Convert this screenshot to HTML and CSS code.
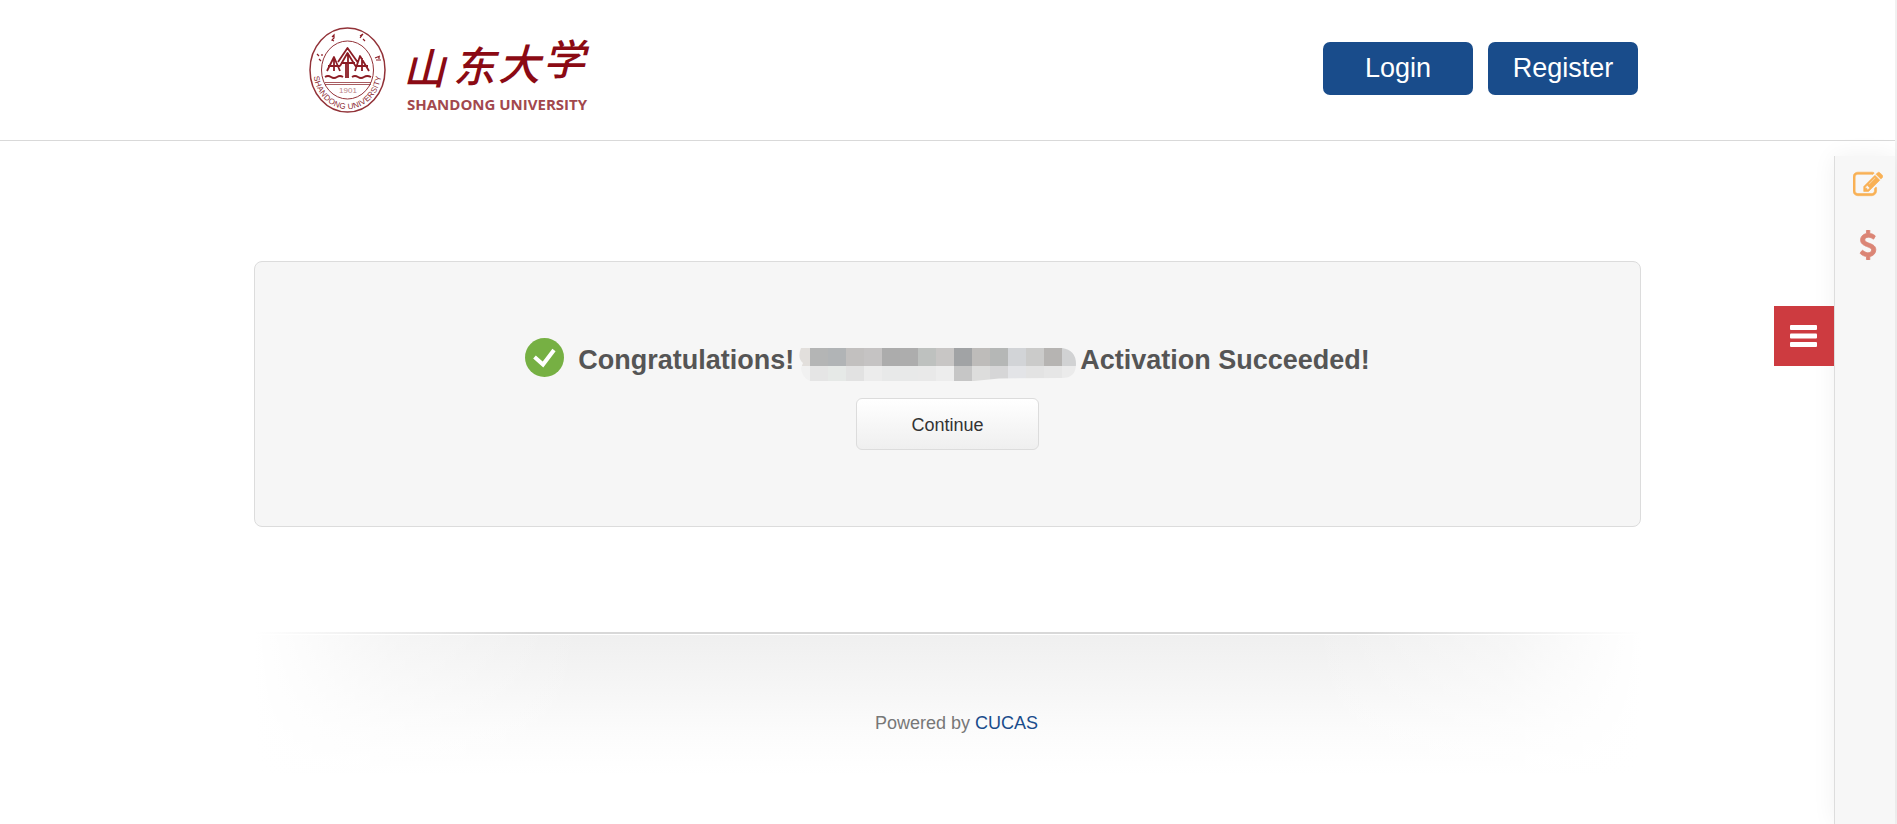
FILE: index.html
```html
<!DOCTYPE html>
<html lang="en">
<head>
<meta charset="utf-8">
<title>Shandong University</title>
<link rel="stylesheet" href="styles.css">
</head>
<body>
<header class="header">
  <div class="container header-inner">
    <a class="logo" href="#" aria-label="Shandong University">
      <svg width="290" height="100" viewBox="0 0 290 100" fill="none">
        <g stroke="#923238">
          <ellipse cx="42.500" cy="50" rx="37.500" ry="42" stroke-width="1.500"/>
          <ellipse cx="42.500" cy="50" rx="26" ry="29" stroke-width="1"/>
          <path d="M20 62.500h46M20 64.500h46" stroke-width=".8"/>
        </g>
        <g stroke="#8c1c24" stroke-width="1.800" stroke-linejoin="round">
          <path d="M20 57q3-2 6 0t6 0 6 0M47 57q3-2 6 0t6 0 7 0"/>
          <path d="M22 51l7-14 6 14M29 38v13M23 46h12M33 42l9.500-14 10 14M35 46l7.500-13 8 13M43 33v25M36 43h14M50 51l5-15 9 15M57 38v13M50 46h13M41 58V44"/>
        </g>
        <path d="M27 17l2-2 0 3-2 2 2 1M55 16l3-2-3 4M58 19l2 2M12 34l2 2M14 39l2 2M17 34v2M70 38l5-2M71 40h5M74 36v3" stroke="#8c1c24" stroke-width="1.200"/>
        <text class="seal-year" x="43" y="73" text-anchor="middle">1901</text>
        <path id="seal-arc" d="M10.500 51A32 36 0 0 0 74.500 51"/>
        <text class="seal-name"><textPath href="#seal-arc" startOffset="50%" text-anchor="middle">SHANDONG UNIVERSITY</textPath></text>
        <text class="logo-cn" x="98 148 193 238" y="64 62 60 55">山东大学</text>
        <text class="logo-en" x="102" y="90">SHANDONG UNIVERSITY</text>
      </svg>
    </a>
    <nav class="account">
      <a class="account-link" href="#">Login</a>
      <a class="account-link" href="#">Register</a>
    </nav>
  </div>
</header>

<main class="container card">
  <div class="message">
    <svg class="check" width="39" height="39" viewBox="0 0 39 39" fill="none">
      <circle cx="19.500" cy="19.500" r="19.500" fill="#76b043"/>
      <path d="M9.500 19l8.500 7.500L29 12" stroke="#fff" stroke-width="4"/>
    </svg>
    <h1 class="message-text">Congratulations!</h1>
    <svg class="masked-name" width="277" height="33" viewBox="0 0 277 33">
      <clipPath id="name-shape"><path d="M2 0H263Q277 2 277 16Q277 30 263 30L200 30.500L175 33H11Q3 30 2 20L4 15Q-2 10 2 0Z"/></clipPath>
      <g clip-path="url(#name-shape)" shape-rendering="crispEdges">
        <path fill="#e2dfdc" d="M0 0h11v18H0z"/>
        <path fill="#b4b5b5" d="M11 0h18v18H11z"/>
        <path fill="#b1b4b6" d="M29 0h18v18H29z"/>
        <path fill="#c2c0bf" d="M47 0h18v18H47z"/>
        <path fill="#c5c3c3" d="M65 0h18v18H65z"/>
        <path fill="#acacac" d="M83 0h18v18H83z"/>
        <path fill="#adadad" d="M101 0h18v18h-18z"/>
        <path fill="#bec1bf" d="M119 0h18v18h-18z"/>
        <path fill="#c8c6c5" d="M137 0h18v18h-18z"/>
        <path fill="#a1a3a5" d="M155 0h18v18h-18z"/>
        <path fill="#bebcba" d="M173 0h18v18h-18z"/>
        <path fill="#b5b7b6" d="M191 0h18v18h-18z"/>
        <path fill="#d2d4d7" d="M209 0h18v18h-18z"/>
        <path fill="#cbcbca" d="M227 0h18v18h-18z"/>
        <path fill="#b6b4b2" d="M245 0h18v18h-18z"/>
        <path fill="#d1d2d3" d="M263 0h14v18h-14z"/>
        <path fill="#f1f1f1" d="M0 18h11v15H0z"/>
        <path fill="#e5e5e5" d="M11 18h18v15H11z"/>
        <path fill="#e6e9e7" d="M29 18h18v15H29z"/>
        <path fill="#e2e2e2" d="M47 18h18v15H47z"/>
        <path fill="#ececec" d="M65 18h18v15H65z"/>
        <path fill="#e8e9e9" d="M83 18h36v15H83z"/>
        <path fill="#e9e9e9" d="M119 18h18v15h-18z"/>
        <path fill="#ededed" d="M137 18h18v15h-18z"/>
        <path fill="#c6c6c6" d="M155 18h18v15h-18z"/>
        <path fill="#dddddc" d="M173 18h18v15h-18z"/>
        <path fill="#d6d6d7" d="M191 18h18v15h-18z"/>
        <path fill="#e3e4e7" d="M209 18h18v15h-18z"/>
        <path fill="#e3e3e3" d="M227 18h18v15h-18z"/>
        <path fill="#e6e6e6" d="M245 18h18v15h-18z"/>
        <path fill="#ebebeb" d="M263 18h14v15h-14z"/>
      </g>
    </svg>
    <strong class="message-text message-end">Activation Succeeded!</strong>
  </div>
  <button class="continue" type="button">Continue</button>
</main>

<footer class="container footer">
  <div class="footer-line"></div>
  <p class="footer-text">Powered by <a class="footer-link" href="#">CUCAS</a></p>
</footer>

<aside class="sidebar">
  <button class="menu-toggle" type="button" aria-label="Menu">
    <svg width="27" height="22" viewBox="0 0 27 22" fill="#fff">
      <rect width="27" height="5" rx="1"/>
      <rect y="8.500" width="27" height="5" rx="1"/>
      <rect y="17" width="27" height="5" rx="1"/>
    </svg>
  </button>
  <a class="side-link apply" href="#" aria-label="Apply">
    <svg width="30" height="30" viewBox="0 0 1792 1792" fill="currentColor" stroke="currentColor" stroke-width="36"><path d="M888 1184l116-116-152-152-116 116v56h96v96h56zm440-720q-16-16-33 1l-350 350q-17 17-1 33t33-1l350-350q17-17 1-33zm80 594v190q0 119-84.500 203.500t-203.500 84.500h-832q-119 0-203.500-84.500t-84.500-203.500v-832q0-119 84.500-203.500t203.500-84.500h832q63 0 117 25 15 7 18 23 3 17-9 29l-49 49q-14 14-32 8-23-6-45-6h-832q-66 0-113 47t-47 113v832q0 66 47 113t113 47h832q66 0 113-47t47-113v-126q0-13 9-22l64-64q15-15 35-7t20 29zm-96-738l288 288-672 672h-288v-288zm444 132l-92 92-288-288 92-92q28-28 68-28t68 28l152 152q28 28 28 68t-28 68z"/></svg>
  </a>
  <a class="side-link fees" href="#" aria-label="Fees">
    <svg width="30" height="30" viewBox="0 0 1792 1792" fill="currentColor" stroke="currentColor" stroke-width="50"><path d="M1362 1185q0 153-99.500 263.500t-258.500 136.500v175q0 14-9 23t-23 9h-135q-13 0-22.500-9.500t-9.500-22.500v-175q-66-9-127.500-31t-101.500-44.500-74-48-46.500-37.500-17.500-18q-17-21-2-41l103-135q7-10 23-12 15-2 24 9l2 2q113 99 243 125 37 8 74 8 81 0 142.500-43t61.500-122q0-28-15-53t-33.500-42-58.500-37.500-66-32-80-32.500q-39-16-61.500-25t-61.500-26.500-62.500-31-56.500-35.500-53.500-42.500-43.500-49-35.500-58-21-66.500-8.500-78q0-138 98-242t255-134v-180q0-13 9.500-22.500t22.500-9.500h135q14 0 23 9t9 23v176q57 6 110.500 23t87 33.500 63.500 37.500 39 29 15 14q17 18 5 38l-81 146q-8 15-23 16-14 3-27-7-3-3-14.500-12t-39-26.500-58.500-32-74.500-26-85.500-11.500q-95 0-155 43t-60 111q0 26 8.500 48t29.500 41.500 39.500 33 56 31 60.500 27 70 27.500q53 20 81 31.500t76 35 75.500 42.500 62 50 53 63.500 31.500 76.500 13 94z"/></svg>
  </a>
</aside>
</body>
</html>
```
FILE: styles.css
```css
* {
  box-sizing: border-box;
}

body {
  margin: 0;
  min-height: 100vh;
  border-right: 2px solid #f1f1f1;
  background: #fff;
  font-family: "Liberation Sans", Arial, sans-serif;
  font-size: 18px;
  color: #777;
}

.container {
  max-width: 1387px;
  margin: 0 auto;
}

.header {
  border-bottom: 1px solid #d9d9d9;
}

.header-inner {
  display: flex;
  justify-content: space-between;
  align-items: flex-start;
  height: 140px;
  padding: 20px 3px 0 51px;
}

.logo {
  display: block;
}

.logo svg {
  display: block;
}

.seal-year {
  font-family: "Liberation Sans", Arial, sans-serif;
  font-size: 8px;
  fill: #b98286;
}

.seal-name {
  font-family: "Liberation Sans", Arial, sans-serif;
  font-size: 8px;
  fill: #8c2a31;
  dominant-baseline: middle;
}

.logo-cn {
  font-family: "Noto Sans CJK SC", sans-serif;
  font-size: 42px;
  font-style: italic;
  font-weight: 500;
  fill: #8b0a14;
}

.logo-en {
  font-family: "Open Sans", sans-serif;
  font-size: 15px;
  font-weight: 700;
  fill: #a2484d;
}

.account {
  display: flex;
  gap: 15px;
  padding-top: 22px;
}

.account-link {
  width: 150px;
  height: 53px;
  border-radius: 7px;
  background: #194c8b;
  color: #fff;
  font-size: 27px;
  line-height: 52px;
  text-align: center;
  text-decoration: none;
}

.card {
  display: flex;
  flex-direction: column;
  align-items: center;
  margin-top: 120px;
  padding: 76px 20px;
  border: 1px solid #dcdcdc;
  border-radius: 8px;
  background: #f6f6f6;
}

.message {
  display: flex;
  align-items: flex-start;
}

.message-text {
  margin: 0 5px 0 14px;
  color: #555;
  font-size: 27px;
  font-weight: bold;
  line-height: 44px;
}

.message-end {
  margin: 0 0 0 4px;
}

.masked-name {
  margin-top: 10px;
}

.continue {
  width: 183px;
  height: 52px;
  margin-top: 16px;
  padding: 2px 0 0;
  border: 1px solid #dcdcdc;
  border-radius: 6px;
  background: linear-gradient(#fff, #efefef);
  color: #333;
  font-family: inherit;
  font-size: 18px;
}

.footer {
  height: 155px;
  margin-top: 105px;
  background:
    linear-gradient(to right, #fff, rgba(255, 255, 255, 0.4) 10%, rgba(255, 255, 255, 0) 24%, rgba(255, 255, 255, 0) 76%, rgba(255, 255, 255, 0.4) 90%, #fff),
    linear-gradient(#efefef, #f5f5f5 33%, #fbfbfb 62%, #fff 92%);
}

.footer-line {
  height: 3px;
  border-bottom: 1px solid #fff;
  background: linear-gradient(to right, #fff, #d8d8d8 20%, #d8d8d8 80%, #fff);
}

.footer-text {
  margin: 0;
  padding: 78px 0 0 18px;
  line-height: 20px;
  text-align: center;
}

.footer-link {
  color: #194c8b;
  text-decoration: none;
}

.sidebar {
  position: fixed;
  top: 156px;
  right: 2px;
  bottom: 0;
  display: flex;
  flex-direction: column;
  align-items: center;
  gap: 30px;
  width: 61px;
  padding: 14px 0 0 6px;
  border-left: 1px solid #ddd;
  background: #f7f7f7;
  box-shadow: 0 0 24px rgba(0, 0, 0, 0.06);
}

.side-link {
  height: 30px;
}

.apply {
  color: #f9b155;
}

.fees {
  color: #db8575;
}

.menu-toggle {
  position: absolute;
  top: 150px;
  right: 61px;
  display: flex;
  align-items: center;
  justify-content: center;
  width: 60px;
  height: 60px;
  padding: 0 2px 0 0;
  border: 0;
  background: #cd3b40;
}
```
